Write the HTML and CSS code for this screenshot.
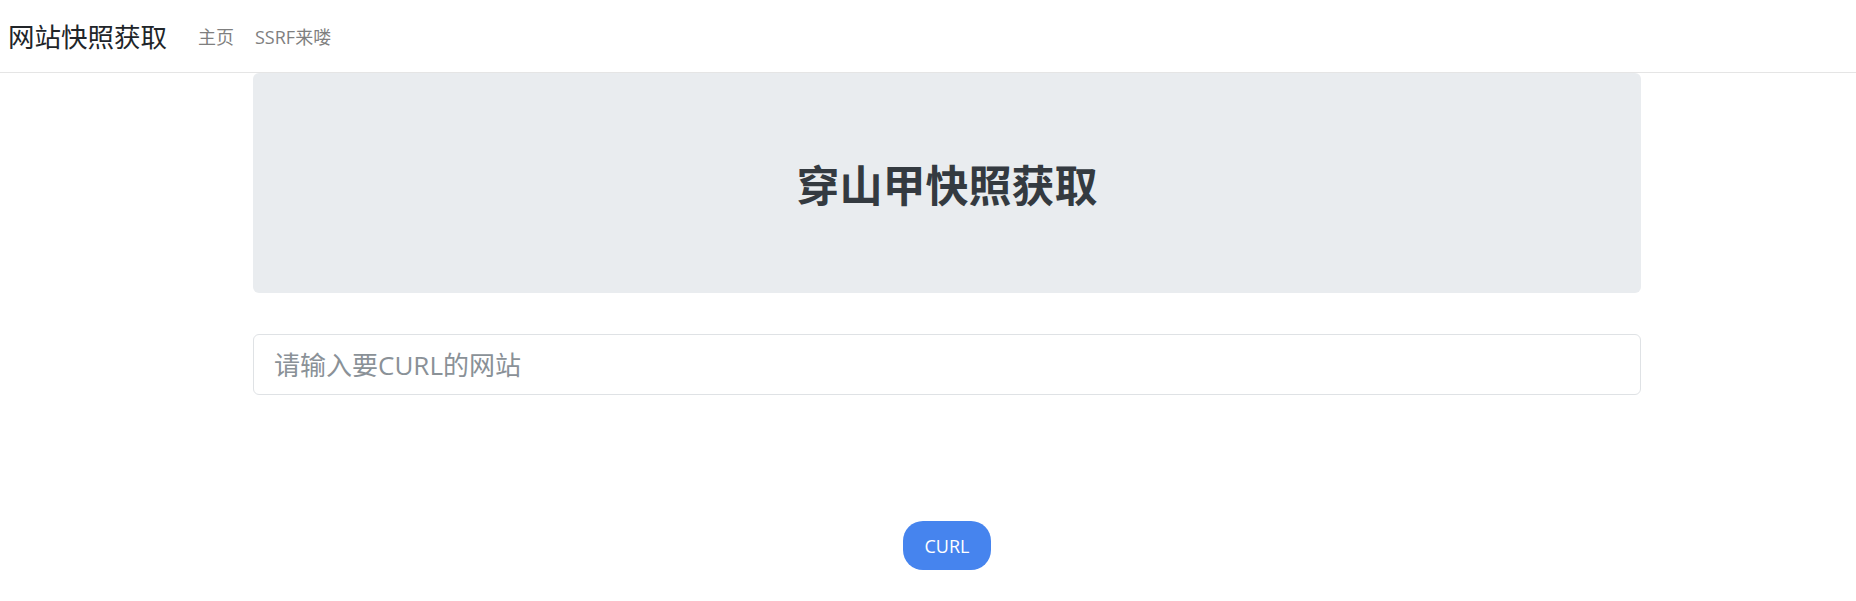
FILE: index.html
```html
<!DOCTYPE html>
<html lang="zh">
<head>
<meta charset="utf-8">
<title>网站快照获取</title>
<link rel="stylesheet" href="styles.css">
</head>
<body>
<nav class="navbar">
  <a class="brand" href="#">网站快照获取</a>
  <ul class="nav">
    <li><a href="#">主页</a></li>
    <li><a href="#">SSRF来喽</a></li>
  </ul>
</nav>
<main class="container">
  <div class="jumbotron">
    <h1 class="title">穿山甲快照获取</h1>
  </div>
  <form class="form">
    <input class="input" type="text" placeholder="请输入要CURL的网站">
    <div class="actions">
      <button class="btn" type="button">CURL</button>
    </div>
  </form>
</main>
</body>
</html>
```

FILE: styles.css
```css
* { box-sizing: border-box; }
html, body { margin: 0; padding: 0; background: #fff; }
body {
  font-family: "Open Sans", "Noto Sans CJK SC", sans-serif;
  color: #212529;
}
.navbar {
  height: 73px;
  border-bottom: 1px solid #e5e5e5;
  display: flex;
  align-items: center;
  padding: 0 8px;
}
.brand {
  font-family: "Noto Sans CJK SC", sans-serif;
  font-size: 26.5px;
  color: #212529;
  text-decoration: none;
  margin-right: 31px;
  line-height: 1;
}
.nav {
  list-style: none;
  margin: 0;
  padding: 0;
  display: flex;
  gap: 21px;
}
.nav a {
  font-family: "Open Sans", "Noto Sans CJK SC", sans-serif;
  font-size: 18px;
  color: #7f7f7f;
  text-decoration: none;
}
.container {
  width: 1388px;
  margin-left: 253px;
}
.jumbotron {
  background: #e9ecef;
  border-radius: 6px;
  height: 220px;
  display: flex;
  align-items: center;
  justify-content: center;
}
.title {
  margin: 0;
  font-family: "Noto Sans CJK SC", sans-serif;
  font-weight: 700;
  font-size: 43px;
  color: #343a40;
  line-height: 1;
}
.form { margin-top: 41px; }
.input {
  display: block;
  width: 100%;
  height: 61px;
  border: 1px solid #dfe2e5;
  border-radius: 6px;
  padding: 0 20px;
  font-family: "Open Sans", "Noto Sans CJK SC", sans-serif;
  font-size: 26px;
  color: #495057;
  outline: none;
}
.input::placeholder { color: #8a9197; }
.actions {
  display: flex;
  justify-content: center;
  margin-top: 126px;
}
.btn {
  width: 88px;
  height: 49px;
  border: none;
  border-radius: 20px;
  background: #4684ee;
  color: #fff;
  font-family: "Open Sans", sans-serif;
  font-size: 18px;
  padding: 0;
  cursor: pointer;
}
```
